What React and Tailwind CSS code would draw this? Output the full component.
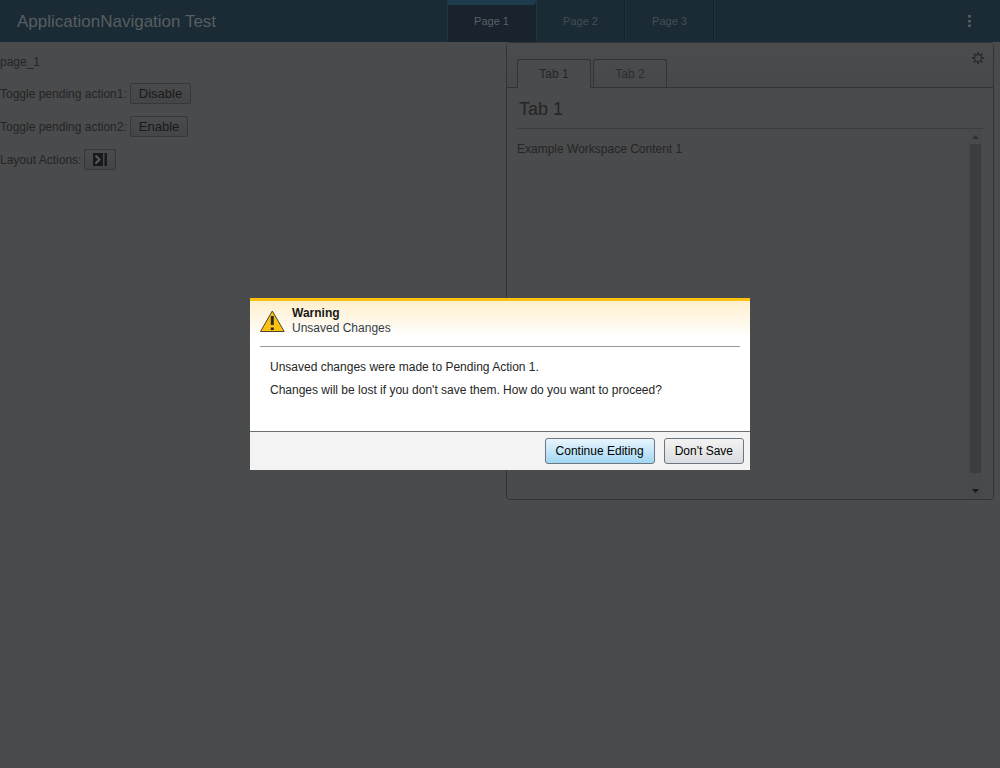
import React from "react";

const pages = ["Page 1", "Page 2", "Page 3"];

function Header() {
  return (
    <header className="flex h-[42px] items-stretch bg-[#1a2b35]">
      <h1 className="flex w-[44.7%] items-center pt-px pl-[17px] text-[17px] text-[#585d60]">
        ApplicationNavigation Test
      </h1>
      <nav className="flex">
        {pages.map((name, i) => (
          <a
            key={name}
            href="#"
            className={
              i === 0
                ? "flex w-[89px] items-center justify-center border-x border-t-[5px] border-t-[#1e3b4b] border-r-[#14222b] border-l-[#20333e] bg-[#18232e] pb-[5px] text-[11px] text-[#5c6063]"
                : "flex w-[89px] items-center justify-center border-x border-r-[#14222b] border-l-[#20333e] text-[11px] text-[#434e55]"
            }
          >
            {name}
          </a>
        ))}
        <span className="w-px bg-[#20333e]" />
      </nav>
      <button aria-label="More" className="mr-6 ml-auto flex w-[13px] items-center justify-center">
        <svg width="3" height="14" viewBox="0 0 3 14" fill="#54595c">
          <rect y="1" width="3" height="2.5" />
          <rect y="6" width="3" height="2.5" />
          <rect y="10.5" width="3" height="2.5" />
        </svg>
      </button>
    </header>
  );
}

const grayButton =
  "h-[21px] rounded-[2px] border border-[#363738] bg-linear-to-b from-[#4a4b4c] to-[#444546] px-2 text-[13px] leading-[19px] text-[#18191a]";

function Controls() {
  return (
    <section className="flex flex-col gap-3 pt-3">
      <p className="h-[17px] leading-[17px]">page_1</p>
      <div className="flex h-[21px] items-center gap-[3px]">
        <label htmlFor="action1">Toggle pending action1:</label>
        <button id="action1" className={grayButton}>Disable</button>
      </div>
      <div className="flex h-[21px] items-center gap-[3px]">
        <label htmlFor="action2">Toggle pending action2:</label>
        <button id="action2" className={grayButton}>Enable</button>
      </div>
      <div className="flex h-[21px] items-center gap-[3px]">
        <label htmlFor="layout">Layout Actions:</label>
        <button id="layout" aria-label="Collapse" className={grayButton}>
          <svg width="14" height="13" viewBox="0 0 14 13">
            <rect width="10" height="13" fill="#18191a" />
            <rect x="11.5" width="2.5" height="13" fill="#18191a" />
            <path d="M2.5 2.5 6.5 6.5 2.5 10.5" fill="none" stroke="#5a5b5c" strokeWidth="2" />
          </svg>
        </button>
      </div>
    </section>
  );
}

function Workspace() {
  return (
    <section className="flex h-[458px] flex-col rounded-[4px] border border-[#323334]">
      <div className="flex h-[45px] justify-between rounded-t-[3px] border-b border-[#323334] bg-linear-to-b from-[#4b4c4d] to-[#474849] pr-[9px] pl-[10px]">
        <div role="tablist" className="flex items-end gap-[2px]">
          <button role="tab" aria-selected="true" className="-mb-px h-[29px] w-[74px] rounded-t-[3px] border border-b-0 border-[#323334] bg-[#4a4b4c] text-[#242526]">
            Tab 1
          </button>
          <button role="tab" aria-selected="false" className="h-[28px] w-[74px] rounded-t-[3px] border border-b-0 border-[#323334] text-[#2d2e2f]">
            Tab 2
          </button>
        </div>
        <button aria-label="Settings" className="mt-[9px] h-3 w-3">
          <svg width="12" height="12" viewBox="0 0 12 12" fill="none" stroke="#2b2c2d">
            <circle cx="6" cy="6" r="3.5" strokeWidth="1.3" />
            <path d="M6 0v2M6 10v2M0 6h2M10 6h2M1.7 1.7l1.5 1.5M8.8 8.8l1.5 1.5M10.3 1.7 8.8 3.2M3.2 8.8 1.7 10.3" strokeWidth="1.8" />
          </svg>
        </button>
      </div>
      <div className="flex grow flex-col px-[10px]">
        <h2 className="h-[41px] border-b border-[#3b3c3d] pl-[2px] text-[18px] leading-[42px]">Tab 1</h2>
        <div className="flex grow">
          <p className="grow pt-3 leading-[17px]">Example Workspace Content 1</p>
          <div className="flex w-[15px] flex-col items-center bg-[#48494a]">
            <svg className="h-[15px] w-[7px]" viewBox="0 0 7 15" fill="#303132">
              <path d="M3.5 6 7 10H0z" />
            </svg>
            <div className="mb-[11px] w-[11px] grow bg-[#3c3d3e]" />
            <svg className="h-[15px] w-[7px]" viewBox="0 0 7 15" fill="#18191a">
              <path d="M0 5h7L3.5 9z" />
            </svg>
          </div>
        </div>
      </div>
    </section>
  );
}

function WarningDialog() {
  return (
    <div className="fixed inset-0 flex items-center justify-center">
      <div
        role="alertdialog"
        aria-modal="true"
        aria-labelledby="warning-title"
        aria-describedby="warning-text"
        className="w-[500px] border-t-[3px] border-[#fec10d] bg-white"
      >
        <div className="bg-linear-to-b from-[#ffefcc] to-white to-[36px] px-[10px]">
          <div className="flex h-[46px] gap-[7px] border-b border-[#999999] pt-[5px]">
            <svg className="mt-1" width="25" height="23" viewBox="0 0 25 23">
              <path d="M12.3 1 24.2 21.5H.5z" fill="#fec10d" stroke="#4b4632" strokeLinejoin="round" />
              <path d="M10.8 6h3v9h-3zM10.8 17.5h3v2.5h-3z" fill="#2b2b2b" />
            </svg>
            <div className="leading-[15px] text-[#333d47]">
              <h2 id="warning-title" className="font-bold text-[#1a1a1a]">Warning</h2>
              <p>Unsaved Changes</p>
            </div>
          </div>
        </div>
        <div id="warning-text" className="flex h-[84px] flex-col gap-2 px-5 pt-[13px] leading-[15px] text-[#262626]">
          <p>Unsaved changes were made to Pending Action 1.</p>
          <p>Changes will be lost if you don't save them. How do you want to proceed?</p>
        </div>
        <div className="flex h-[39px] items-center justify-end gap-[9px] border-t border-[#6b7270] bg-[#f3f3f3] pr-[6px]">
          <button className="h-[26px] rounded-[3px] border border-[#6b7680] bg-linear-to-b from-[#e9f5fd] to-[#a0d7f4] px-[10px] text-black">
            Continue Editing
          </button>
          <button className="h-[26px] rounded-[3px] border border-[#6b7680] bg-linear-to-b from-[#f3f3f3] to-[#dadcdf] px-[10px] text-black">
            Don't Save
          </button>
        </div>
      </div>
    </div>
  );
}

export default function App() {
  return (
    <div className="min-h-screen bg-[#4a4b4c] font-['Liberation_Sans',Arial,sans-serif] text-[12px] text-[#242526]">
      <Header />
      <main className="grid grid-cols-[506fr_488fr] pr-[6px]">
        <Controls />
        <Workspace />
      </main>
      <WarningDialog />
    </div>
  );
}
